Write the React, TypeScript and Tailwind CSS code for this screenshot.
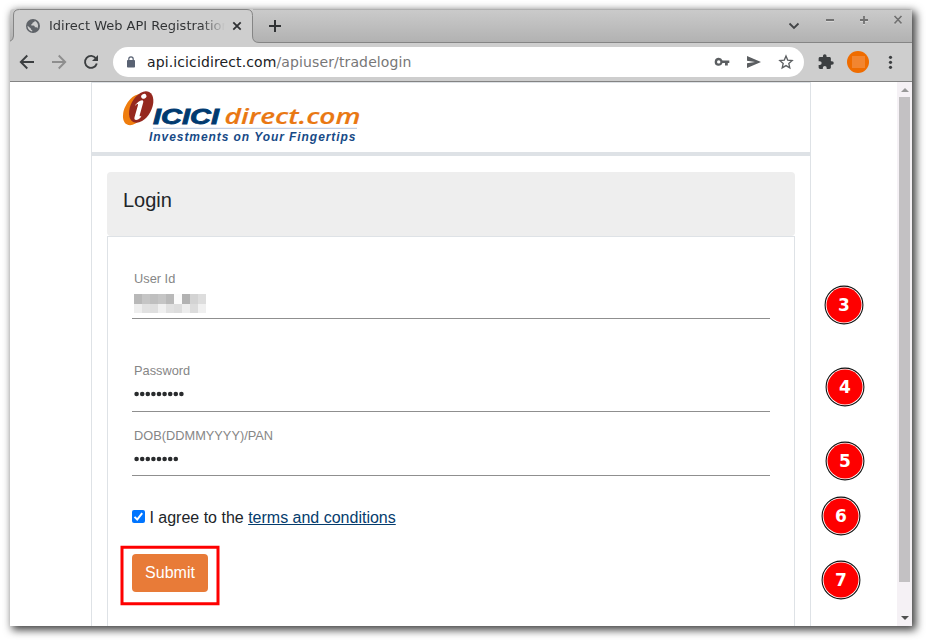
import type { ReactNode } from "react";

function BrandLogo() {
  return (
    <svg className="ml-[18px] block" width="260" height="69" viewBox="110 83 260 69">
      <ellipse cx="135.200" cy="109.600" rx="10.200" ry="17" transform="rotate(30 135.200 109.600)" fill="#ef7d0e" />
      <ellipse cx="141.200" cy="107" rx="10.400" ry="17" transform="rotate(28 141.200 107)" fill="#95281f" />
      <ellipse cx="143.800" cy="96.300" rx="2.700" ry="2.300" transform="rotate(-25 143.800 96.300)" fill="#fff" />
      <path d="M134.800 105.600c2-2.800 4.800-5 7.200-5.400 1.300-.1 1.500.9 1.200 2.200l-3.400 12.400c-.4 1.600.1 2 1.500 1l-.3 1.100c-1.500 1.700-3.400 3-4.900 3.100-1.500 0-2-1-1.600-2.700l3.300-11.600c.5-1.700.1-2-1-1.400l-1.500 1.300z" fill="#fff" />
      <text x="153" y="123.700" textLength="66" lengthAdjust="spacingAndGlyphs" fontFamily="Liberation Sans, sans-serif" fontSize="21.500" fontWeight="700" fontStyle="italic" fill="#003a70" stroke="#003a70" strokeWidth=".8">ICICI</text>
      <text x="224.500" y="123.900" textLength="136" lengthAdjust="spacingAndGlyphs" fontFamily="Open Sans, sans-serif" fontSize="21" fontWeight="600" fontStyle="italic" fill="#e97813" stroke="#e97813" strokeWidth=".15">direct.com</text>
      <path d="M153 128.300h204" stroke="#b3c3dc" strokeWidth="1" />
      <text x="149" y="141" textLength="206.500" fontFamily="Liberation Sans, sans-serif" fontSize="12" fontWeight="700" fontStyle="italic" fill="#174a86">Investments on Your Fingertips</text>
    </svg>
  );
}

function TabStrip() {
  return (
    <div className="relative flex h-[34px] bg-linear-to-b from-[#cbcbcb] to-[#b1b1b1]">
      <svg className="absolute inset-0" width="902" height="34" viewBox="10 9 902 34">
        <path d="M10 43V41.200Q13.500 40 13.500 36V15q0-5.500 6-5.500H247q5.500 0 5.500 6V36q0 6.500 6.500 6.500V43z" fill="#cecece" />
        <path d="M10 41.200Q13.500 40 13.500 36V15q0-5.500 6-5.500H247q5.500 0 5.500 6V36q0 6.500 6.500 6.500H912" fill="none" stroke="#858585" />
        <path d="M253 9.500H912" stroke="#b0b0b0" />
      </svg>
      <div className="relative flex h-full w-[243px] items-center pl-4">
        <svg className="shrink-0" width="14" height="14" viewBox="0 0 14 14">
          <circle cx="7" cy="7" r="7" fill="#5f6368" />
          <path d="M8.700 1.800C8.800 3 7.900 3.400 6.800 3.500c-.3 1.300-.8 1.500-1.500 1.600.3 1 .2 1.500-.8 1.500h3c1 0 1.200.8 1.300 1.600h1c1 0 1.300.5 1.500 1.200C12.900 7 12 3.400 8.700 1.800zM1.600 6.800C1.400 9.600 3.500 12.200 6.200 12.400V11c-.9 0-1.400-.6-1.400-1.500z" fill="#cecece" />
        </svg>
        <div className="ml-[9px] w-[186px] shrink-0 bg-linear-to-r from-[#303234] from-[152px] to-transparent to-[176px] bg-clip-text font-['DejaVu_Sans',sans-serif] text-[13px] leading-5 whitespace-nowrap text-transparent">
          Idirect Web API Registration
        </div>
        <svg className="ml-[-3px] shrink-0" width="10" height="10" viewBox="0 0 10 10" stroke="#303234" strokeWidth="1.800"><path d="m1.300 1.300 7.400 7.400m0-7.400L1.300 8.700" /></svg>
      </div>
      <svg className="relative mt-[11px] ml-4" width="12" height="12" viewBox="0 0 12 12" stroke="#303234" strokeWidth="2"><path d="M6 0v12M0 6h12" /></svg>
      <svg className="relative ml-auto" width="134" height="33" viewBox="778 9 134 33" fill="none">
        <path d="m789.500 23.500 4.500 4.500 4.500-4.500" stroke="#424446" strokeWidth="1.800" />
        <g stroke="#dedede" strokeWidth="1.500"><path d="M826 21h8M860 21h8M864 17v8m30.500-8.500 7 7.500m0-7.500-7 7.500" /></g>
        <g stroke="#717171" strokeWidth="1.800"><path d="M826 20h8M860 20h8M864 16v8m30.500-8 7 7.500m0-7.500-7 7.500" /></g>
      </svg>
    </div>
  );
}

function Toolbar() {
  return (
    <div className="flex h-[39px] items-center border-b border-[#838383] bg-[#cecece]">
      <svg width="103" height="38" viewBox="10 43 103 38" fill="none" strokeWidth="1.900">
        <path d="M34 62H21m6.300-6.500L20.800 62l6.500 6.500" stroke="#3c3f41" />
        <path d="M52 62h13m-6.300-6.500 6.500 6.500-6.500 6.500" stroke="#8e8e8e" />
        <path d="M96 58.500a6 6 0 1 0 .8 5" stroke="#3c3f41" />
        <path d="M98 55v6h-6z" fill="#3c3f41" />
      </svg>
      <div className="flex h-[30px] w-[691px] items-center rounded-full bg-white pl-3.5">
        <svg width="8" height="12" viewBox="0 0 8 12"><path d="M1.800 5V3a2.200 2.200 0 0 1 4.400 0v2" fill="none" stroke="#596273" strokeWidth="1.200" /><rect y="4" width="8" height="7.500" rx=".8" fill="#596273" /></svg>
        <span className="ml-3 font-['DejaVu_Sans',sans-serif] text-[14px] leading-5 tracking-[0.120px] text-[#777]"><span className="text-[#202124]">api.icicidirect.com</span>/apiuser/tradelogin</span>
        <svg className="ml-auto" width="94" height="30" viewBox="710 47 94 30" fill="#5b5e61">
          <path fillRule="evenodd" d="M718.700 57.800a4 4 0 0 1 3.800 2.700h6.800V63h-1.500v2.500h-2.800V63h-2.500a4 4 0 1 1-3.800-5.200zm0 2.400a1.700 1.700 0 1 0 0 3.400 1.700 1.700 0 0 0 0-3.400z" />
          <path d="m747 56 14 6-14 6v-4.700l8-1.300-8-1.300z" />
          <path d="m786 55.900 1.700 4.200 4.500.4-3.400 3 1 4.400-3.800-2.300-3.800 2.300 1-4.400-3.400-3 4.500-.4z" fill="none" stroke="#5b5e61" strokeWidth="1.300" />
        </svg>
      </div>
      <svg width="108" height="38" viewBox="804 43 108 38">
        <path transform="translate(817.200 53.600) scale(.72 .7)" d="M20.500 11H19V7c0-1.100-.9-2-2-2h-4V3.500a2.500 2.500 0 0 0-5 0V5H4c-1.100 0-2 .9-2 2v3.800h1.500a2.700 2.700 0 0 1 0 5.400H2V20c0 1.100.9 2 2 2h3.800v-1.500a2.700 2.700 0 0 1 5.400 0V22H17c1.100 0 2-.9 2-2v-4h1.500a2.500 2.500 0 0 0 0-5z" fill="#3c3f41" />
        <circle cx="858" cy="62" r="11" fill="#ef6c00" /><path d="M852 56h13v12h-13z" fill="#f28530" />
        <g fill="#3c3f41"><circle cx="890.500" cy="57.300" r="1.600" /><circle cx="890.500" cy="62.300" r="1.600" /><circle cx="890.500" cy="67.300" r="1.600" /></g>
      </svg>
    </div>
  );
}

function Field({ label, className, children }: { label: string; className: string; children: ReactNode }) {
  return (
    <div className={`border-b border-[#8f8f8f] pl-0.5 ${className}`}>
      <div className="text-[12.800px] leading-5 text-[#868686]">{label}</div>
      {children}
    </div>
  );
}

function Dots({ count }: { count: number }) {
  return (
    <svg className="mt-[10px] block" width={count * 5.6} height="6" fill="#292b2d">
      {Array.from({ length: count }, (_, i) => <circle key={i} cx={2.6 + i * 5.6} cy="3" r="2.300" />)}
    </svg>
  );
}

const maskedRows = [
  ["#b8b8b8", "#c5c5c5", "#bfbfbf", "#c5c5c5", "#b9b9b9", "#fbfbfb", "#b2b2b2", "#d3d3d3", "#dddddd"],
  ["#eeeeee", "#e1e1e1", "#dfdfdf", "#f0f0f0", "#e1e1e1", "#dddddd", "#ededed", "#dcdcdc", "#f0f0f0"],
];

function MaskedUser() {
  return (
    <div className="mt-[5px] w-[72px]">
      {maskedRows.map((row, r) => (
        <div key={r} className="flex">
          {row.map((c, i) => <span key={i} className={r === 0 ? "h-2.5 w-2" : "h-[9px] w-2"} style={{ backgroundColor: c }} />)}
        </div>
      ))}
    </div>
  );
}

function Step({ n, place }: { n: number; place: string }) {
  return (
    <div className={`absolute ${place} size-[40px]`}>
      <svg className="absolute inset-0" width="40" height="40" viewBox="0 0 40 40">
        <circle cx="20" cy="20" r="18.900" fill="#fff" stroke="#111" strokeWidth="1.100" />
        <circle cx="20" cy="20" r="17.500" fill="#fe0000" />
      </svg>
      <div className="relative flex size-full items-center justify-center pt-px font-['DejaVu_Sans',sans-serif] text-[17px] leading-none font-bold text-white">{n}</div>
    </div>
  );
}

export default function App() {
  return (
    <div className="relative h-[642px] w-[928px] overflow-hidden bg-white pt-[9px] pl-[10px] font-['Liberation_Sans',Arial,sans-serif]">
      <div className="flex h-[617px] w-[902px] flex-col overflow-hidden rounded-t-[3px] bg-white shadow-[3px_3px_8px_1px_rgba(0,0,0,0.75)]">
        <TabStrip />
        <Toolbar />
        <div className="flex min-h-0 flex-1">
          <div className="w-[887px] overflow-hidden pl-[81px]">
            <main className="h-[600px] w-[720px] border border-[#dee2e6]">
              <header className="h-[73px] border-b-4 border-[#dee2e6]"><BrandLogo /></header>
              <section className="mx-[15px] mt-4">
                <h1 className="h-16 rounded-[4px] bg-[#eee] px-4 pt-[13px] text-[20px] leading-[30px] text-[#212529]">Login</h1>
                <form className="h-[420px] border border-[#dee2e6] px-6 pt-8">
                  <Field label="User Id" className="h-[50px]"><MaskedUser /></Field>
                  <Field label="Password" className="mt-[42px] h-[51px]"><Dots count={9} /></Field>
                  <Field label="DOB(DDMMYYYY)/PAN" className="mt-[14px] h-[50px]"><Dots count={8} /></Field>
                  <label className="mt-[30px] flex h-6 items-center text-[16px] leading-6 whitespace-pre text-[#212529]">
                    <svg className="mr-[4.400px] mb-[3px]" width="13" height="13" viewBox="0 0 13 13"><rect width="13" height="13" rx="2" fill="#0075ff" /><path d="m2.500 6.900 2.700 2.600 5-6.400" fill="none" stroke="#fff" strokeWidth="2" /></svg>
                    I agree to the <a className="text-[#053c6d] underline">terms and conditions</a>
                  </label>
                  <button type="button" className="mt-6 block h-[38px] w-[76px] rounded-[4px] bg-[#e87b38] text-[16px] leading-6 text-white">Submit</button>
                </form>
              </section>
            </main>
          </div>
          <aside className="flex w-[15px] flex-col items-center bg-[#f5f1f5]">
            <div className="flex h-[15px] items-center"><div className="border-x-[4px] border-b-[4px] border-x-transparent border-b-[#999]" /></div>
            <div className="h-[485px] w-[11px] bg-[#c3c1c3]" />
            <div className="mt-[34px] border-x-[4px] border-t-[4px] border-x-transparent border-t-[#505050]" />
          </aside>
        </div>
      </div>
      <svg className="absolute top-[545px] left-[120px]" width="100" height="61" viewBox="120 545 100 61"><path d="M122 547.200h96v56.500h-96z" fill="none" stroke="#fe0000" strokeWidth="3" /></svg>
      <Step n={3} place="top-[285px] left-[824px]" />
      <Step n={4} place="top-[367px] left-[825px]" />
      <Step n={5} place="top-[441px] left-[825px]" />
      <Step n={6} place="top-[496px] left-[821px]" />
      <Step n={7} place="top-[560px] left-[821px]" />
    </div>
  );
}
